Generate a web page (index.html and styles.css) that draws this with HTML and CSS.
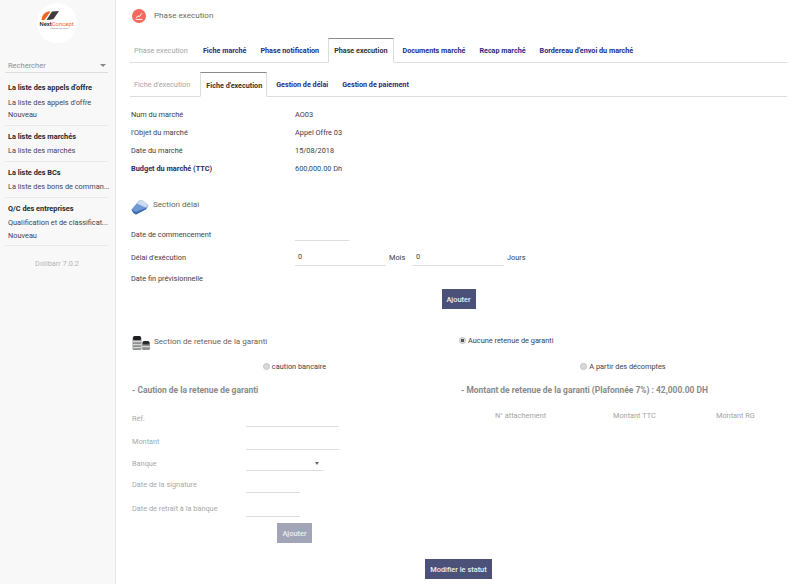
FILE: index.html
```html
<!DOCTYPE html>
<html lang="fr">
<head>
<meta charset="utf-8">
<title>Phase execution</title>
<link rel="stylesheet" href="styles.css">
</head>
<body>
<div class="app">
  <aside class="sidebar">
    <div class="logo-wrap">
      <div class="logo">
        <svg class="logo-mark" viewBox="0 0 18 9" width="18" height="9"><path d="M0.5 9 Q1 4 4 2 Q6 0.5 9 0 L8.5 2 L3.5 9 Z" fill="#f0641e"/><path d="M5.5 9 L11 0.5 L18 0 L12.5 8 Q10 9 5.5 9 Z" fill="#3d3d40"/></svg>
        <div class="logo-text"><span class="logo-next">Next</span><span class="logo-concept">Concept</span></div>
        <div class="logo-sub">Integrate your vision</div>
      </div>
    </div>
    <div class="search"><span>Rechercher</span><span class="search-arrow"></span></div>
    <nav class="menu">
      <div class="menu-group">
        <div class="menu-head">La liste des appels d'offre</div>
        <div class="menu-item">La liste des appels d'offre</div>
        <div class="menu-item">Nouveau</div>
      </div>
      <div class="menu-group">
        <div class="menu-head">La liste des marchés</div>
        <div class="menu-item">La liste des marchés</div>
      </div>
      <div class="menu-group">
        <div class="menu-head">La liste des BCs</div>
        <div class="menu-item">La liste des bons de comman...</div>
      </div>
      <div class="menu-group">
        <div class="menu-head">Q/C des entreprises</div>
        <div class="menu-item">Qualification et de classificat...</div>
        <div class="menu-item">Nouveau</div>
      </div>
    </nav>
    <div class="version">Dolibarr 7.0.2</div>
  </aside>

  <main class="main">
    <header class="page-head">
      <span class="page-icon">
        <svg viewBox="0 0 14 14" width="14" height="14"><circle cx="7" cy="7" r="7" fill="#f4685f"/><path d="M3.8 9.2 L6 6.8 L7.2 7.8 L10 4.2 M3.6 10.4 H10.4" fill="none" stroke="#fff" stroke-width="0.9"/></svg>
      </span>
      <span class="page-title">Phase execution</span>
    </header>

    <div class="tabs tabs-main">
      <span class="tab tab-label">Phase execution</span>
      <a class="tab">Fiche marché</a>
      <a class="tab">Phase notification</a>
      <a class="tab tab-active">Phase execution</a>
      <a class="tab">Documents marché</a>
      <a class="tab">Recap marché</a>
      <a class="tab">Bordereau d'envoi du marché</a>
    </div>

    <div class="tabs tabs-sub">
      <span class="tab tab-label">Fiche d'execution</span>
      <a class="tab tab-active">Fiche d'execution</a>
      <a class="tab">Gestion de délai</a>
      <a class="tab">Gestion de paiement</a>
    </div>

    <dl class="facts">
      <div class="fact"><dt>Num du marché</dt><dd>AO03</dd></div>
      <div class="fact"><dt>l'Objet du marché</dt><dd>Appel Offre 03</dd></div>
      <div class="fact"><dt>Date du marché</dt><dd>15/08/2018</dd></div>
      <div class="fact fact-strong"><dt>Budget du marché (TTC)</dt><dd>600,000.00 Dh</dd></div>
    </dl>

    <section class="delai">
      <div class="section-head">
        <svg class="section-icon" viewBox="0 0 18 18" width="18" height="18"><path d="M0.5 11.5 L8 2.5 L11 2 L17.5 7 L15.5 11 L5 16.5 Q2 15.5 0.5 11.5 Z" fill="#6f9ad6"/><path d="M0.5 11.5 Q2 15.5 5 16.5 L15.5 11 L14.5 10 L5 14 Z" fill="#3c6db0"/><path d="M8 2.5 L11 2 L17.5 7 L14.5 9.5 L6 5.5 Z" fill="#cfdcf0"/></svg>
        <span>Section délai</span>
      </div>
      <div class="delai-row delai-start">
        <label class="delai-label">Date de commencement</label>
        <span class="line line-short"></span>
      </div>
      <div class="delai-row delai-duration">
        <label class="delai-label">Délai d'exécution</label>
        <span class="line line-num">0</span>
        <span class="unit">Mois</span>
        <span class="line line-num">0</span>
        <span class="unit">Jours</span>
      </div>
      <div class="delai-row delai-end">
        <label class="delai-label">Date fin prévisionnelle</label>
      </div>
      <div class="center"><button class="btn btn-add">Ajouter</button></div>
    </section>

    <section class="retenue">
      <div class="retenue-col">
        <div class="section-head section-head-coins">
          <svg class="section-icon" viewBox="0 0 18 14" width="18" height="14"><rect x="0.5" y="1" width="9" height="13" rx="1.5" fill="#8f9193"/><rect x="1" y="0" width="8" height="4" rx="1.5" fill="#1f1f21"/><rect x="0.5" y="5" width="9" height="1.2" fill="#d6d6d6"/><rect x="0.5" y="8" width="9" height="1.2" fill="#d6d6d6"/><rect x="0.5" y="11" width="9" height="1.2" fill="#d6d6d6"/><rect x="10" y="6" width="8" height="8" rx="1.5" fill="#8f9193"/><rect x="10.5" y="5" width="7" height="3.5" rx="1.5" fill="#2c2c2e"/><rect x="10" y="10" width="8" height="1.2" fill="#d6d6d6"/></svg>
          <span>Section de retenue de la garanti</span>
        </div>
        <div class="radio-row"><span class="radio"></span><span>caution bancaire</span></div>
        <h3 class="sub-head">- Caution de la retenue de garanti</h3>
        <form class="form">
          <label>Réf.</label><span class="line line-wide"></span>
          <label>Montant</label><span class="line line-wide"></span>
          <label>Banque</label><span class="line line-select"><i class="select-arrow"></i></span>
          <label>Date de la signature</label><span class="line line-short"></span>
          <label>Date de retrait à la banque</label><span class="line line-short"></span>
        </form>
        <div class="center"><button class="btn btn-disabled" type="button">Ajouter</button></div>
      </div>
      <div class="retenue-col retenue-right">
        <div class="radio-first"><span class="radio radio-on"></span><span>Aucune retenue de garanti</span></div>
        <div class="radio-row radio-row-right"><span class="radio"></span><span>A partir des décomptes</span></div>
        <h3 class="sub-head">- Montant de retenue de la garanti (Plafonnée 7%) : 42,000.00 DH</h3>
        <div class="rg-table"><span>N° attachement</span><span>Montant TTC</span><span>Montant RG</span></div>
      </div>
    </section>

    <div class="center status-wrap"><button class="btn btn-status">Modifier le statut</button></div>
  </main>
</div>
</body>
</html>
```
FILE: styles.css
```css
* { box-sizing: border-box; }
html, body { margin: 0; height: 584px; overflow: hidden; background: #fff; }
body { font-family: Roboto, "Liberation Sans", sans-serif; font-size: 7.35px; color: #3c3c46; }
.app { display: flex; height: 584px; }

.sidebar { width: 116px; flex: none; background: #f8f8f8; border-right: 1px solid #e6e6e6; padding: 3px 7px 0 5px; }
.logo-wrap { display: flex; justify-content: center; }
.logo { width: 40px; height: 40px; border-radius: 50%; background: #fff; display: flex; flex-direction: column; align-items: flex-start; padding: 8px 0 0 3px; }
.logo-mark { display: block; width: 18px; height: 9px; margin-left: 1px; }
.logo-text { font-size: 5.9px; line-height: 6px; white-space: nowrap; margin-top: 1px; }
.logo-next { color: #222; font-weight: 500; }
.logo-concept { color: #ee6a2a; }
.logo-sub { font-size: 2px; line-height: 2px; color: #777; margin-left: 11px; }

.search { margin-top: 17px; height: 13px; display: flex; justify-content: space-between; align-items: center; padding: 0 2px 2px 3px; color: #8f8f8f; border-bottom: 1px solid #ddd; font-size: 7.5px; }
.search-arrow { width: 0; height: 0; border-left: 3px solid transparent; border-right: 3px solid transparent; border-top: 3px solid #888; }

.menu { margin-top: 7px; }
.menu-group { padding: 0 0 3px 3px; border-bottom: 1px solid #eaeaea; margin-bottom: 3px; }
.menu-head { font-weight: 700; color: #26262e; height: 16px; line-height: 15px; white-space: nowrap; }
.menu-item { color: #3f4257; height: 12.5px; line-height: 12.5px; white-space: nowrap; }
.menu-head + .menu-item { margin-top: 0.5px; }
.version { text-align: center; color: #b5b5b5; margin-top: 12px; height: 12px; line-height: 12px; padding-left: 1px; }

.main { flex: none; width: 657px; margin-left: 14px; }
.page-head { display: flex; align-items: flex-start; height: 38px; padding: 9px 0 0 2px; }
.page-icon { width: 14px; height: 14px; margin-right: 8px; }
.page-icon svg { display: block; }
.page-title { font-size: 8.1px; color: #6e6a5e; line-height: 12px; }

.tabs { display: flex; height: 25px; border-bottom: 1px solid #ddd; align-items: stretch; font-size: 7.2px; }
.tabs-sub { margin-top: 9px; }
.tab { display: flex; align-items: center; color: #2a2a7e; padding: 0 7px; white-space: nowrap; font-weight: 700; }
.tab-label { color: #a5a5a5; font-weight: 400; margin-left: 4px; padding: 0; margin-right: 8px; font-size: 7.35px; }
.tabs-sub .tab-label { margin-right: 10px; }
.tabs-sub .tab { padding-top: 1px; }
.tab-active { color: #333; padding: 0 5px; margin: 0 2px; height: 25px; background: #fff; border: 1px solid #ddd; border-top-color: #8a8a8a; border-bottom-color: #fff; }
.tabs-sub .tab-active { padding-right: 4px; margin-left: 0; }

.facts { margin: 9px 0 0; }
.fact { display: flex; height: 18px; line-height: 18px; }
.fact dt { width: 165px; padding-left: 1px; }
.fact dd { margin: 0; }
.fact-strong dt { font-weight: 700; color: #2a2a5e; }
.fact-strong dd { color: #2a4a6e; }

.delai { margin-top: 20px; }
.section-head { display: flex; align-items: flex-start; height: 18px; padding-left: 1px; font-size: 8.1px; color: #6a6452; }
.section-head span { line-height: 10px; margin-top: 1px; }
.section-icon { display: block; margin-right: 4px; flex: none; }
.delai-row { display: flex; }
.delai-label { width: 165px; padding-left: 1px; flex: none; }
.delai-start { margin-top: 10px; height: 16px; align-items: center; }
.delai-duration { margin-top: 6px; height: 19px; align-items: center; }
.delai-end { margin-top: 5px; height: 12px; align-items: center; }
.line { display: block; border-bottom: 1px solid #ddd; height: 16px; line-height: 15px; flex: none; }
.line-short { width: 54px; }
.line-num { width: 91px; height: 17px; line-height: 16px; padding-left: 3px; color: #444; }
.unit { width: 27px; padding-left: 3px; }
.delai-start .line { height: 14px; }
.center { display: flex; justify-content: center; }
.delai .center { margin-top: 5px; }
.btn { font: 500 7.4px Roboto, "Liberation Sans", sans-serif; color: #eee; background: #4b5178; border: 0; height: 20px; padding: 0; }
.btn-add { width: 34px; }
.btn-disabled { width: 35px; background: #a2a5b8; }
.btn-status { width: 67px; }

.retenue { display: grid; grid-template-columns: 329px 328px; margin-top: 27px; }
.section-head-coins { height: 14px; padding-left: 2px; }
.section-head-coins span { margin-top: 0; }
.radio-first { display: flex; align-items: center; height: 9px; margin-bottom: 15px; }
.radio-row { display: flex; justify-content: center; align-items: center; margin-top: 10px; height: 12px; }
.radio-row-right { margin-top: 0; }
.radio { width: 7px; height: 7px; border-radius: 50%; background: #d8d8d8; border: 1px solid #c4c4c4; margin-right: 2px; flex: none; }
.radio-on { background: radial-gradient(circle, #555 0 1.6px, #e3e3e3 2px); border-color: #bbb; }
.sub-head { margin: 12px 0 0 2px; font-size: 8.45px; line-height: 12px; font-weight: 700; color: #8a8a8a; }
.form { display: grid; grid-template-columns: 114px 1fr; grid-template-rows: 23px 22px 21px 24px 20px; margin: 17px 0 0 2px; color: #a9a9a9; }
.form label { line-height: 12px; }
.form .line { height: 14px; }
.form .line-select { height: 13px; position: relative; }
.line-wide { width: 93px; }
.line-select { width: 77px; }
.select-arrow { position: absolute; right: 4px; top: 4px; width: 0; height: 0; border-left: 2px solid transparent; border-right: 2px solid transparent; border-top: 3px solid #666; }
.rg-table { display: grid; grid-template-columns: 118px 103px 1fr; margin: 15px 0 0 36px; line-height: 10px; color: #a3a3a3; }
.status-wrap { margin-top: 16px; }
```
